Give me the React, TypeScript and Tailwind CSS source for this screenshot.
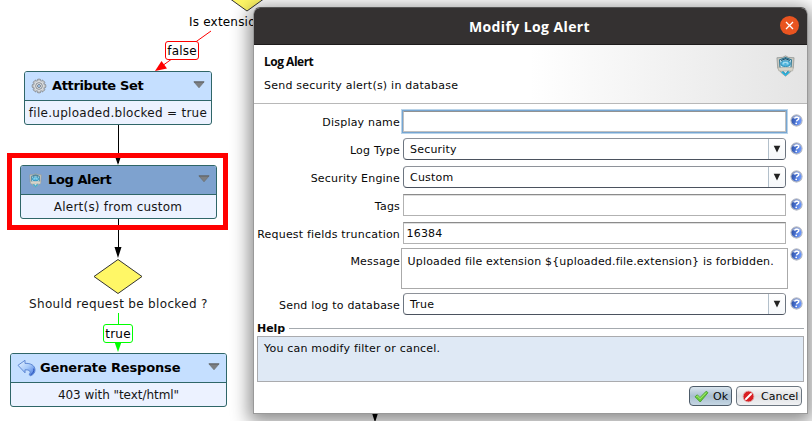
import type { ReactNode } from 'react';

function Caret() {
  return (
    <svg width="12" height="8" viewBox="0 0 12 8">
      <path d="M.8.8h10.4L6 6.8z" fill="#7c7f82" stroke="#6a6e71" strokeWidth=".7" />
      <path d="M1 1h10" stroke="#5c6063" strokeWidth=".8" />
    </svg>
  );
}

function Gear() {
  const teeth = [0, 45, 90, 135];
  return (
    <svg width="16" height="16" viewBox="0 0 16 16">
      {teeth.map((a) => (
        <rect key={a} x="6.2" y="1.2" width="3.6" height="13.6" rx=".9" fill="#c4c7ca" stroke="#7f8388" strokeWidth=".8" transform={`rotate(${a} 8 8)`} />
      ))}
      <circle cx="8" cy="8" r="5" fill="#dcdee0" />
      <circle cx="8" cy="8" r="3.300" fill="#f2f3f4" stroke="#84898f" strokeWidth="1" />
      <circle cx="8" cy="8" r="1.600" fill="#9fc4ea" stroke="#77828e" strokeWidth=".9" />
    </svg>
  );
}

function Shield({ w, h }: { w: number; h: number }) {
  return (
    <svg width={w} height={h} viewBox="0 0 20 23">
      <path d="M10 .8 13 2.4 19 2.8 18.2 13.5 14.5 18.6 10 22.2 5.5 18.6 1.8 13.5 1 2.8 7 2.4z" fill="#c9c8bf" stroke="#8f9492" strokeWidth=".8" />
      <path d="M10 2.6 16.2 5 15.8 13 10 20.6 4.2 13 3.8 5z" fill="#cdeaf5" stroke="#23708f" strokeWidth="1.1" />
      <path d="M5.4 5.6 10 3.8l4.6 1.8" fill="none" stroke="#174f6b" strokeWidth="1.1" />
      <ellipse cx="10" cy="9" rx="5" ry="3.1" fill="#4fb4dc" stroke="#1c7ea8" strokeWidth=".8" />
      <path d="M6.8 9.2h2m2.3 0h2.1M7.5 7.6h5" stroke="#d6f3fc" strokeWidth=".9" />
      <path d="M1.800 12.600c4 1.400 8-.2 10.800.6l5.600-.6-.6 4c-3.800.8-5.500-.4-8.500.2-2 .3-4.200.2-6.200-.2z" fill="#d7d4c9" stroke="#a3a198" strokeWidth=".6" />
      <path d="M6 17.600 10 21l4-3.400" fill="none" stroke="#20b6e6" strokeWidth="1.500" />
    </svg>
  );
}

function ReplyArrow() {
  return (
    <svg width="19" height="18" viewBox="0 0 19 18">
      <defs>
        <linearGradient id="reply" x1="0" y1="0" x2="1" y2="1">
          <stop offset="0" stopColor="#eaf4ff" />
          <stop offset=".5" stopColor="#a9cbfa" />
          <stop offset="1" stopColor="#3b6fdc" />
        </linearGradient>
      </defs>
      <path d="M1 6.300 8 1.300v3.100c5.500-.4 10 2 10 6.600 0 2.500-1.500 4.800-4.500 5.700l-1.600-1.200c2.300-1.600 2-5-3.900-4.700v3z" fill="url(#reply)" stroke="#5580cf" strokeWidth=".9" strokeLinejoin="round" />
      <path d="M16.800 9.500c.4 2.500-.8 5-3.300 6.400" fill="none" stroke="#2d55b8" strokeWidth="1" />
    </svg>
  );
}

function HelpBadge() {
  return (
    <svg width="13" height="13" viewBox="0 0 13 13" className="shrink-0">
      <defs>
        <linearGradient id="badge" x1="0" y1="0" x2="1" y2=".3">
          <stop offset="0" stopColor="#1f4297" />
          <stop offset="1" stopColor="#6f9bff" />
        </linearGradient>
      </defs>
      <circle cx="6.500" cy="6.500" r="5.600" fill="url(#badge)" stroke="#b9bcc4" strokeWidth="1.100" />
      <path d="M2 4.800A5 5 0 0 1 11 4.500C8 3.500 5 3.500 2 4.800z" fill="#c5cfe8" opacity=".75" />
      <path d="M4.600 4.700c.3-1.900 4.300-1.900 4.200 0-.1 1.300-2 1.200-2.300 2.700" fill="none" stroke="#fff" strokeWidth="1.400" />
      <circle cx="6.200" cy="9.300" r=".9" fill="#fff" />
    </svg>
  );
}

type NodeProps = { title: string; body: string; icon: ReactNode; place: string; head: string; titleClass: string; bodyClass: string };

function FlowNode({ title, body, icon, place, head, titleClass, bodyClass }: NodeProps) {
  return (
    <div className={`absolute flex flex-col overflow-hidden rounded-[3px] border border-[#2f6668] bg-[#ecf2ff] ${place}`}>
      <div className={`flex h-[29px] shrink-0 items-center border-b border-[#2f6668] pr-[6px] ${head}`}>
        {icon}
        <span className={`whitespace-nowrap text-[13px] font-bold ${titleClass}`}>{title}</span>
        <span className="ml-auto pb-[3px]"><Caret /></span>
      </div>
      <div className={`flex flex-1 items-center justify-center whitespace-nowrap text-[12px] text-[#151515] ${bodyClass}`}>{body}</div>
    </div>
  );
}

function Row({ label, height, children, top }: { label: string; height: string; children: ReactNode; top?: boolean }) {
  return (
    <div className={`flex ${height} ${top ? 'items-start' : 'items-center'}`}>
      <div className={`flex w-[145px] shrink-0 justify-end whitespace-nowrap ${top ? 'pt-[8px]' : 'pt-[3px]'}`}><span className="-mr-px">{label}</span></div>
      <div className="flex w-[390px] shrink-0 justify-center">{children}</div>
      <div className={`pl-px ${top ? 'pt-[1px]' : 'pb-[2px]'}`}><HelpBadge /></div>
    </div>
  );
}

function Combo({ value }: { value: string }) {
  return (
    <div className="flex h-[22px] w-[383px] items-center overflow-hidden rounded-[4px] border border-[#6d7580] border-t-[#8e9299] border-b-[#4b525e] bg-white pl-[6.500px]">
      <span className="pt-[2px]">{value}</span>
      <span className="ml-auto flex h-full w-[17px] items-center justify-center border-l border-[#b3c0cb] bg-linear-to-b from-white to-[#f6f8fa]">
        <svg width="8" height="8" viewBox="0 0 8 8"><path d="M.7.800h6.600L4 7.500z" fill="#222" /></svg>
      </span>
    </div>
  );
}

function Field({ value }: { value: string }) {
  return (
    <div className="flex h-[22px] w-[383px] items-center border border-[#b2b2b2] border-t-[#8b8b8b] bg-white pl-[3px] pt-px shadow-[inset_0_1px_0_#dedede]">{value}</div>
  );
}

function Dialog() {
  return (
    <div className="absolute left-[253px] top-[7px] flex h-[407px] w-[555px] flex-col overflow-hidden rounded-t-[7px] border border-[#999] border-t-[#555] bg-white text-[11px] leading-[14px] tracking-[0.200px] text-[#080808]">
      <div className="relative flex h-[37px] shrink-0 items-center justify-center border-b border-[#1e1c1c] bg-[#343131] pt-[2px]">
        <span className="-ml-[2px] font-['Open_Sans',sans-serif] text-[14px] font-bold tracking-[0.400px] text-white">Modify Log Alert</span>
        <span className="absolute right-[8px] top-[8px] flex size-[19px] items-center justify-center rounded-full bg-[#e95420]">
          <svg width="9" height="9" viewBox="0 0 9 9"><path d="M1 1l7 7M8 1 1 8" stroke="#fff" strokeWidth="1.300" /></svg>
        </span>
      </div>
      <div className="flex h-[59px] shrink-0 justify-between border-b border-[#b8b8b8] bg-linear-to-r from-white from-50% to-[#e4e4e4] pl-[10px] pr-[12px]">
        <div className="flex flex-col gap-[10px] pt-[10px]">
          <b className="font-['Open_Sans',sans-serif] text-[12px] tracking-[-0.500px]">Log Alert</b>
          <span className="tracking-[0.230px]">Send security alert(s) in database</span>
        </div>
        <div className="pt-[10px]"><Shield w={19} h={22} /></div>
      </div>
      <div className="flex flex-col pt-[3px]">
        <Row label="Display name" height="h-[28px]">
          <div className="h-[25px] w-[387px] border border-[#b9d4ea] bg-[#76a5d1] p-px">
            <div className="h-full border border-[#c0c0c0] border-t-[#929292] bg-white" />
          </div>
        </Row>
        <Row label="Log Type" height="h-[28px]"><Combo value="Security" /></Row>
        <Row label="Security Engine" height="h-[28px]"><Combo value="Custom" /></Row>
        <Row label="Tags" height="h-[28px]"><Field value="" /></Row>
        <Row label="Request fields truncation" height="h-[28px]"><Field value="16384" /></Row>
        <Row label="Message" height="h-[43px]" top>
          <div className="mt-px h-[41px] w-[387px] border border-[#aaa] bg-white pl-[6px] pt-[6px] tracking-[0.180px]">{'Uploaded file extension ${uploaded.file.extension} is forbidden.'}</div>
        </Row>
        <Row label="Send log to database" height="h-[28px]"><Combo value="True" /></Row>
      </div>
      <div className="mx-[3px] flex h-[18px] items-center gap-[4px]">
        <b className="pt-[4px] tracking-[-0.050px]">Help</b>
        <span className="mt-[3px] h-px flex-1 bg-[#a4a9ae]" />
      </div>
      <div className="ml-[3px] h-[46px] w-[547px] shrink-0 border border-[#aaabae] bg-[#dfe9f5] pl-[6px] pt-[5px]">You can modify filter or cancel.</div>
      <div className="flex justify-end gap-[4px] pr-[5px] pt-[4px]">
        <div className="flex h-[20px] w-[43px] items-center rounded-[4px] border border-[#4d5b69] bg-linear-to-b from-[#dae5ee] via-[#a9bed0] to-[#c5d6e3] pl-[4px]">
          <svg width="15" height="13" viewBox="0 0 15 13"><path d="M1 6.800 3.300 4.800 6 7.600 12.200 1.200 14 2.700 6.200 12z" fill="#67ca38" stroke="#409c2a" strokeWidth=".8" /><path d="m2.500 6.500.9-.6L6 8.700l6.200-6.200" fill="none" stroke="#b5ef84" strokeWidth=".9" /></svg>
          <span className="ml-[4px] pt-px">Ok</span>
        </div>
        <div className="flex h-[20px] w-[66px] items-center rounded-[4px] border border-[#6c7680] bg-linear-to-b from-[#fafafa] via-[#dfe1e4] to-[#f0f1f3] pl-[5px]">
          <svg width="13" height="13" viewBox="0 0 13 13"><circle cx="6.500" cy="6.500" r="5.400" fill="#d91e22" stroke="#dba9a8" strokeWidth=".9" /><path d="M4 9 9 4" stroke="#fff" strokeWidth="2" strokeLinecap="round" /></svg>
          <span className="ml-[6px] pt-px tracking-[0]">Cancel</span>
        </div>
      </div>
    </div>
  );
}

export default function App() {
  return (
    <div className="relative h-[421px] w-[812px] overflow-hidden bg-white font-['DejaVu_Sans',sans-serif] leading-[14px] text-black">
      <svg className="absolute inset-0" width="812" height="421" viewBox="0 0 812 421">
        <path d="M222-7 247 11 272-7" fill="#fff766" stroke="#333" />
        <path d="M211 31 162 66" stroke="#f00" />
        <path d="M155 71 161.500 61 167 68.500z" fill="#f00" />
        <path d="M118.500 125v38M118.500 219v32" stroke="#000" />
        <path d="m114.500 155h7l-3.500 10zM114.500 247h7l-3.500 11z" />
        <path d="m118 259.500 24 17-24 17-24-17z" fill="#fff766" stroke="#333" />
        <path d="M118.500 313v31" stroke="#0f0" />
        <path d="M114.500 342h7l-3.500 10z" fill="#0f0" />
      </svg>
      <span className="absolute left-[189px] top-[15px] whitespace-nowrap text-[12px] tracking-[0.200px]">Is extension</span>
      <span className="absolute left-[165px] top-[41px] flex h-[19px] w-[34px] items-center justify-center rounded-[3px] border border-[#f00] bg-white text-[12px] tracking-[0.200px]">false</span>
      <FlowNode title="Attribute Set" body="file.uploaded.blocked = true" place="left-[24px] top-[71px] h-[54px] w-[188px]" head="bg-[#c5dfff] pl-[6px]" icon={<Gear />} titleClass="ml-[5px] tracking-[-0.350px]" bodyClass="tracking-[0.280px]" />
      <FlowNode title="Log Alert" body="Alert(s) from custom" place="left-[20px] top-[165px] h-[54px] w-[197px]" head="bg-[#7ea2cf] pl-[8px]" icon={<Shield w={13} h={15} />} titleClass="ml-[6px] tracking-[-0.400px]" bodyClass="tracking-[0.220px] pr-px" />
      <div className="absolute left-[7px] top-[153px] h-[77px] w-[221px] border-[5px] border-[#f00]" />
      <span className="absolute left-[29px] top-[297px] whitespace-nowrap text-[12px] tracking-[0.330px] text-[#151515]">Should request be blocked ?</span>
      <span className="absolute left-[103px] top-[324px] flex h-[19px] w-[30px] items-center justify-center rounded-[3px] border border-[#0f0] bg-white text-[12px] tracking-[0.200px]">true</span>
      <FlowNode title="Generate Response" body={'403 with "text/html"'} place="left-[10px] top-[353px] h-[54px] w-[217px]" head="bg-[#c5dfff] pl-[6px]" icon={<ReplyArrow />} titleClass="ml-[4px] tracking-[-0.150px]" bodyClass="tracking-[-0.050px]" />
      <div className="absolute left-[253px] top-[7px] h-[407px] w-[555px] rounded-t-[7px] shadow-[0_4px_18px_4px_rgba(0,0,0,0.45)]" />
      <svg className="absolute left-[370px] top-[413px]" width="10" height="8" viewBox="0 0 10 8"><path d="M2 0h6L5.500 8h-1z" /></svg>
      <Dialog />
    </div>
  );
}
